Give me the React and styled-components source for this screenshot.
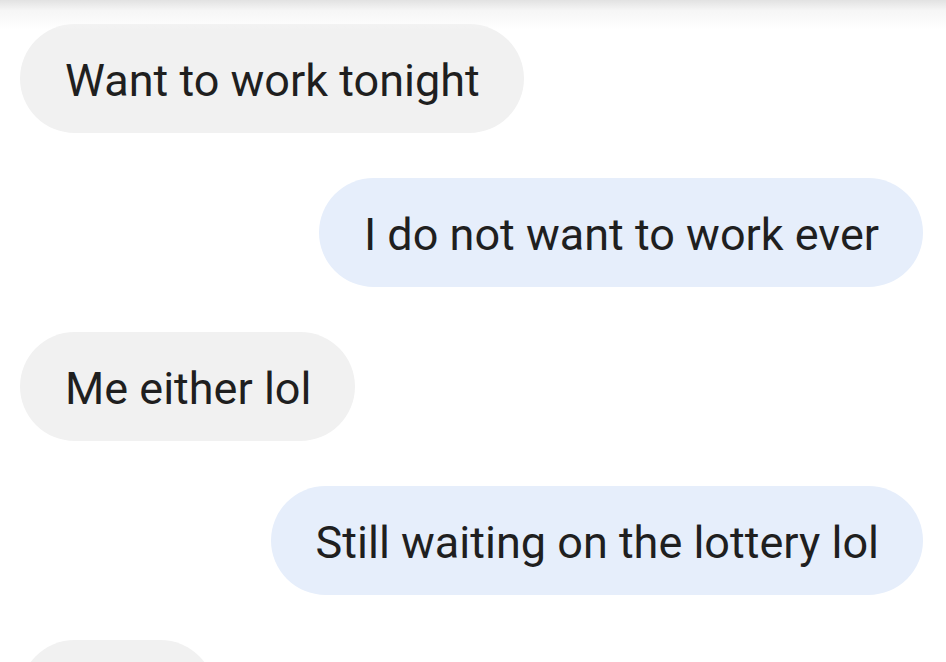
import styled, { createGlobalStyle } from "styled-components";

const GlobalStyle = createGlobalStyle`
  html, body {
    margin: 0;
    padding: 0;
    background: #ffffff;
  }
  body {
    font-family: Roboto, "Noto Sans", "Liberation Sans", sans-serif;
    color: #1f1f1f;
  }
`;

const messages = [
  { id: 1, text: "Want to work tonight", mine: false },
  { id: 2, text: "I do not want to work ever", mine: true },
  { id: 3, text: "Me either lol", mine: false },
  { id: 4, text: "Still waiting on the lottery lol", mine: true },
  { id: 5, text: "Haha", mine: false },
];

export default function App() {
  return (
    <Screen>
      <GlobalStyle />
      <TopShade />
      <Thread>
        {messages.map((m) => (
          <Row key={m.id} $mine={m.mine}>
            <Bubble $mine={m.mine}>{m.text}</Bubble>
          </Row>
        ))}
      </Thread>
    </Screen>
  );
}

const Screen = styled.div`
  position: relative;
  width: 946px;
  height: 662px;
  overflow: hidden;
  background: #ffffff;
`;

const TopShade = styled.div`
  position: absolute;
  top: 0;
  left: 0;
  right: 0;
  height: 30px;
  background: linear-gradient(#e2e2e2 0%, #f6f6f6 35%, rgba(255, 255, 255, 0) 100%);
  pointer-events: none;
`;

const Thread = styled.div`
  display: flex;
  flex-direction: column;
  gap: 45px;
  padding: 24px 23px 0 20px;
`;

const Row = styled.div`
  display: flex;
  justify-content: ${({ $mine }) => ($mine ? "flex-end" : "flex-start")};
`;

const Bubble = styled.div`
  display: flex;
  align-items: center;
  height: 109px;
  box-sizing: border-box;
  padding: 3px 44px 0 45px;
  border-radius: 55px;
  background: ${({ $mine }) => ($mine ? "#e6eefb" : "#f1f1f1")};
  font-size: 45px;
  line-height: 1;
  white-space: nowrap;
`;
